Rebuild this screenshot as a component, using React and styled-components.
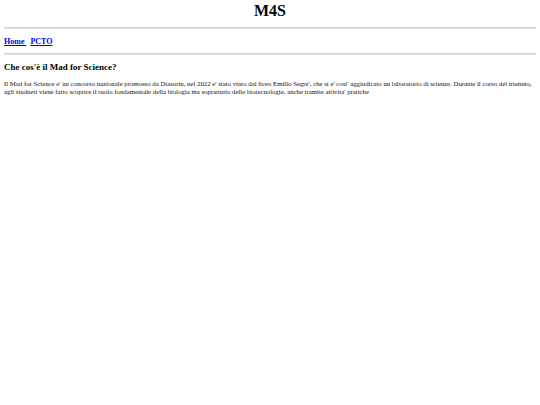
import styled, { createGlobalStyle } from "styled-components";

const GlobalStyle = createGlobalStyle`
  body {
    margin: 0;
    padding: 2px 4px;
    background: #ffffff;
    font-family: "Liberation Serif", "Times New Roman", serif;
    color: #000000;
  }
`;

const Title = styled.h1`
  font-size: 16px;
  text-align: center;
  margin: 0 0 7px;
`;

const Rule = styled.hr`
  margin: 0;
  border: 0;
  height: 1px;
  background: #cfcfcf;
  border-bottom: 1px solid #e4e4e4;
`;

const Nav = styled.nav`
  padding: 8px 0 6px;
  font-size: 8px;
  line-height: 10px;
  font-weight: bold;
`;

const NavLink = styled.a`
  color: #0000ee;
  text-decoration: underline;
`;

const Heading = styled.h3`
  font-size: 9px;
  margin: 7px 0 8px;
`;

const Text = styled.p`
  font-size: 6.78px;
  line-height: 8px;
  margin: 0;
  color: #111111;
`;

export default function App() {
  return (
    <>
      <GlobalStyle />
      <Title>M4S</Title>
      <Rule />
      <Nav>
        <NavLink href="#">Home&nbsp;</NavLink>&nbsp; <NavLink href="#">PCTO</NavLink>
      </Nav>
      <Rule />
      <Heading>Che cos'è il Mad for Science?</Heading>
      <Text>
        Il Mad for Science e' un concorso nazionale promosso da Diasorin, nel 2022 e' stato vinto dal liceo Emilio
        Segre', che si e' cosi' aggiudicato un laboratorio di scienze. Durante il corso del triennio, agli studneti
        viene fatto scoprire il ruolo fondamentale della biologia ma soprattutto delle biotecnologie, anche tramite
        attivita' pratiche
      </Text>
    </>
  );
}
